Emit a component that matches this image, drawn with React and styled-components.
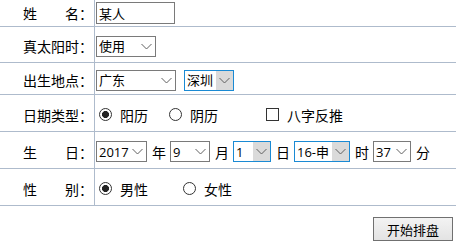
import React from "react";
import styled, { createGlobalStyle } from "styled-components";

const LINE = "#aebbcc";

const Global = createGlobalStyle`
  html, body { margin: 0; padding: 0; background: #fff; }
  body {
    font-family: "Open Sans", "Noto Sans CJK SC", sans-serif;
    font-size: 14px;
    color: #000;
  }
`;

const Page = styled.div`
  width: 456px;
  height: 243px;
  overflow: hidden;
  display: flex;
  flex-direction: column;
`;

const Row = styled.div`
  display: grid;
  grid-template-columns: 95px 1fr;
  height: ${(p) => p.h}px;
  border-bottom: 1px solid ${LINE};
`;

const Label = styled.div`
  border-right: 1px solid ${LINE};
  display: flex;
  align-items: center;
  justify-content: flex-end;
  padding: ${(p) => (p.shift ? "3px" : "0")} 1px 0 0;
  white-space: pre;
  font-family: "Noto Sans CJK SC", sans-serif;
`;

const Field = styled.div`
  display: flex;
  align-items: center;
  padding: ${(p) => (p.shift ? "3px" : "0")} 0 0 1px;
  gap: ${(p) => p.gap || 0}px;
`;

const TextInput = styled.input`
  box-sizing: border-box;
  width: 79px;
  height: 22px;
  border: 1px solid #7a7a7a;
  padding: 0 2px;
  font-size: 13px;
  font-family: "Noto Sans CJK SC", sans-serif;
  outline: none;
`;

const SelectBox = styled.div`
  box-sizing: border-box;
  display: flex;
  width: ${(p) => p.w}px;
  height: 21px;
  border: 1px solid ${(p) => (p.active ? "#1a8ad4" : "#7a7a7a")};
  background: #fff;
  flex: none;
`;

const NativeSelect = styled.select`
  appearance: none;
  -webkit-appearance: none;
  flex: 1;
  min-width: 0;
  border: none;
  outline: none;
  background: transparent;
  font-family: "Open Sans", "Noto Sans CJK SC", sans-serif;
  font-size: 13px;
  color: #000;
  padding: 0 0 0 2px;
  margin: 0;
  height: 100%;
`;

const Arrow = styled.span`
  flex: none;
  width: 17px;
  display: flex;
  align-items: center;
  justify-content: center;
  background: ${(p) => (p.active ? "#dadada" : "transparent")};
`;

const Chevron = () => (
  <svg width="11" height="7" viewBox="0 0 11 7">
    <polyline points="0.5,1 5.5,6 10.5,1" fill="none" stroke="#606060" strokeWidth="1" />
  </svg>
);

const Select = ({ w, active, value, options }) => (
  <SelectBox w={w} active={active}>
    <NativeSelect defaultValue={value}>
      {(options || [value]).map((o) => (
        <option key={o}>{o}</option>
      ))}
    </NativeSelect>
    <Arrow active={active}>
      <Chevron />
    </Arrow>
  </SelectBox>
);

const Unit = styled.span`
  font-family: "Noto Sans CJK SC", sans-serif;
  margin: 0 ${(p) => p.r ?? 4}px 0 ${(p) => p.l ?? 5}px;
`;

const Option = styled.label`
  display: flex;
  align-items: center;
  gap: 8px;
  margin-left: ${(p) => p.ml || 0}px;
  font-family: "Noto Sans CJK SC", sans-serif;
`;

const Radio = styled.input.attrs({ type: "radio" })`
  appearance: none;
  -webkit-appearance: none;
  margin: 0;
  width: 13px;
  height: 13px;
  box-sizing: border-box;
  border: 1px solid #333;
  border-radius: 50%;
  background: #fff;
  &:checked {
    background: radial-gradient(circle, #222 0 3.2px, #fff 3.8px);
  }
`;

const Check = styled.input.attrs({ type: "checkbox" })`
  appearance: none;
  -webkit-appearance: none;
  margin: 0;
  width: 13px;
  height: 13px;
  box-sizing: border-box;
  border: 1px solid #333;
  background: #fff;
`;

const Footer = styled.div`
  display: flex;
  justify-content: flex-end;
  padding: 11px 3px 0 0;
`;

const Button = styled.button`
  width: 80px;
  height: 24px;
  box-sizing: border-box;
  border: 1px solid #707070;
  background: linear-gradient(#f3f3f3, #e3e3e3);
  font-family: "Noto Sans CJK SC", sans-serif;
  font-size: 13px;
  color: #000;
  padding: 0;
`;

export default function App() {
  return (
    <Page>
      <Global />
      <Row h={26}>
        <Label>{"姓　　名："}</Label>
        <Field>
          <TextInput defaultValue="某人" />
        </Field>
      </Row>
      <Row h={35}>
        <Label shift>真太阳时：</Label>
        <Field shift>
          <Select w={60} value="使用" options={["使用", "不使用"]} />
        </Field>
      </Row>
      <Row h={31}>
        <Label shift>出生地点：</Label>
        <Field shift gap={8}>
          <Select w={80} value="广东" />
          <Select w={50} value="深圳" active />
        </Field>
      </Row>
      <Row h={36}>
        <Label shift>日期类型：</Label>
        <Field shift>
          <Option ml={3}>
            <Radio name="dt" defaultChecked />
            阳历
          </Option>
          <Option ml={21}>
            <Radio name="dt" />
            阴历
          </Option>
          <Option ml={48}>
            <Check />
            八字反推
          </Option>
        </Field>
      </Row>
      <Row h={36}>
        <Label shift>{"生　　日："}</Label>
        <Field shift>
          <Select w={51} value="2017" />
          <Unit>年</Unit>
          <Select w={40} value="9" />
          <Unit>月</Unit>
          <Select w={38} value="1" active />
          <Unit>日</Unit>
          <Select w={56} value="16-申" active />
          <Unit>时</Unit>
          <Select w={38} value="37" />
          <Unit>分</Unit>
        </Field>
      </Row>
      <Row h={36}>
        <Label shift>{"性　　别："}</Label>
        <Field shift>
          <Option ml={3}>
            <Radio name="sex" defaultChecked />
            男性
          </Option>
          <Option ml={35}>
            <Radio name="sex" />
            女性
          </Option>
        </Field>
      </Row>
      <Footer>
        <Button>开始排盘</Button>
      </Footer>
    </Page>
  );
}
